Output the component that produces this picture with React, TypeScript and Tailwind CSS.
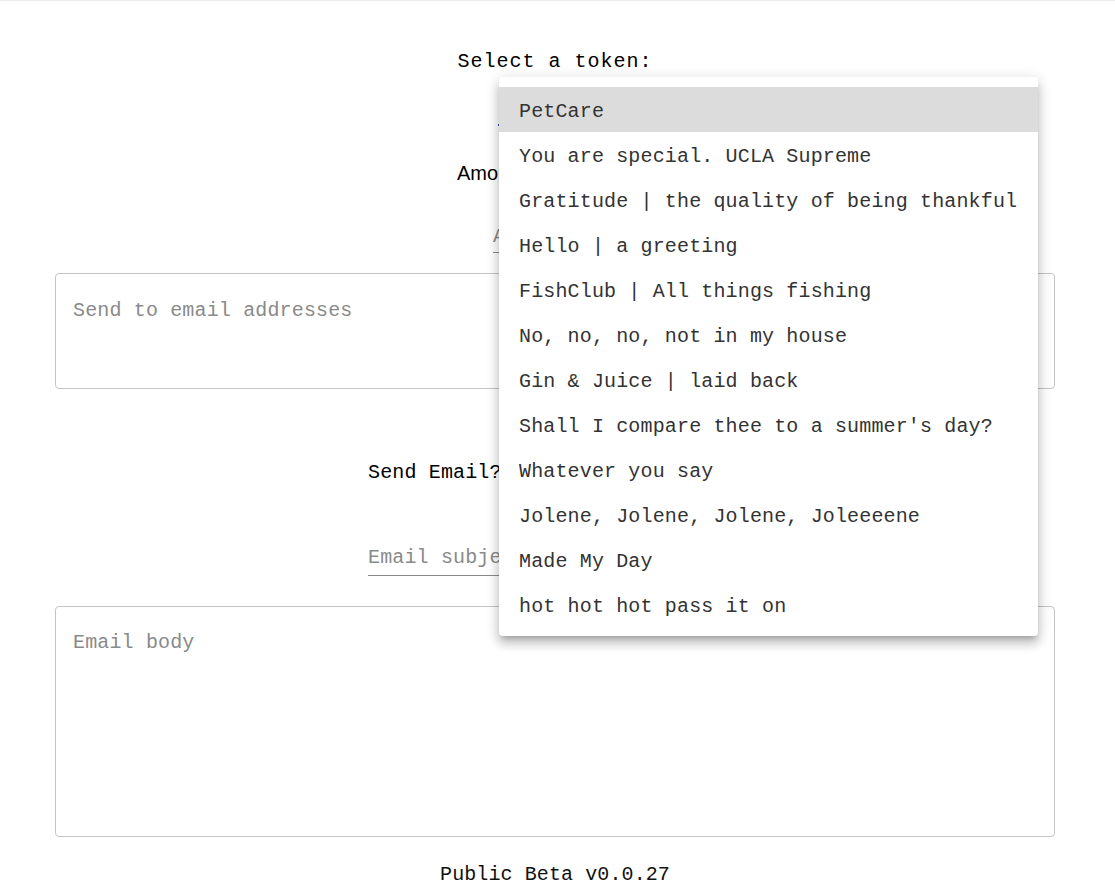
import React from 'react';

const tokens = [
  'PetCare',
  'You are special. UCLA Supreme',
  'Gratitude | the quality of being thankful',
  'Hello | a greeting',
  'FishClub | All things fishing',
  'No, no, no, not in my house',
  'Gin & Juice | laid back',
  "Shall I compare thee to a summer's day?",
  'Whatever you say',
  'Jolene, Jolene, Jolene, Joleeeene',
  'Made My Day',
  'hot hot hot pass it on',
];

const mono = "font-['Liberation_Mono','DejaVu_Sans_Mono',monospace]";

function TokenMenu() {
  return (
    <div className="absolute left-[499px] top-[77px] w-[539px] rounded-[4px] bg-white pt-[10px] pb-[9px] shadow-[0px_5px_5px_-3px_rgba(0,0,0,0.2),0px_8px_10px_1px_rgba(0,0,0,0.14),0px_3px_14px_2px_rgba(0,0,0,0.12)]">
      {tokens.map((t, i) => (
        <div
          key={t}
          className={
            'flex h-[45px] items-center px-[20px] pt-[4px] text-[20px] leading-[24px] tracking-[0.15px] text-[#333] ' +
            (i === 0 ? 'bg-[#dcdcdc]' : '')
          }
        >
          {t}
        </div>
      ))}
    </div>
  );
}

export default function App() {
  return (
    <div className={`relative min-h-screen bg-white text-black ${mono}`}>
      <div className="h-[2px] bg-gradient-to-b from-gray-200 to-white" />
      <div className="flex flex-col items-center pr-[5px]">
        <h2 className="mt-[48px] text-[20px] leading-[24px] tracking-[1px]">Select a token:</h2>
        <div className="mt-[20px] h-[32px] w-[114px] border-b-2 border-[#3f51b5]" />
        <div className="mt-[35px] w-[196px] font-['Liberation_Sans',Arial,sans-serif] text-[20px] leading-[24px]">
          Amount:
        </div>
        <div className="mt-[37px] h-[31px] w-[124px] border-b border-[#8a8a8a] pt-[3px] text-[20px] leading-[24px] tracking-[0.15px] text-[#8a8a8a]">
          Amount
        </div>
        <div className="mt-[20px] h-[116px] w-[1000px] rounded-[4px] border border-[#c4c4c4] px-[17px] pt-[25px] text-[20px] leading-[24px] tracking-[0.15px] text-[#8a8a8a]">
          Send to email addresses
        </div>
        <div className="mt-[72px] flex w-[374px] items-center justify-between text-[20px] leading-[24px] tracking-[0.15px]">
          <span>Send Email?</span>
          <span className="h-[18px] w-[18px] rounded-[2px] border-2 border-[#757575]" />
        </div>
        <div className="mt-[56px] h-[35px] w-[374px] border-b border-[#8a8a8a] pt-[5px] text-[20px] leading-[24px] tracking-[0.15px] text-[#8a8a8a]">
          Email subject
        </div>
        <div className="mt-[30px] h-[231px] w-[1000px] rounded-[4px] border border-[#c4c4c4] px-[17px] pt-[24px] text-[20px] leading-[24px] tracking-[0.15px] text-[#8a8a8a]">
          Email body
        </div>
        <p className="mt-[26px] pb-[4px] text-[20px] leading-[24px] tracking-[0.1px] text-[#111]">Public Beta v0.0.27</p>
      </div>
      <TokenMenu />
    </div>
  );
}
